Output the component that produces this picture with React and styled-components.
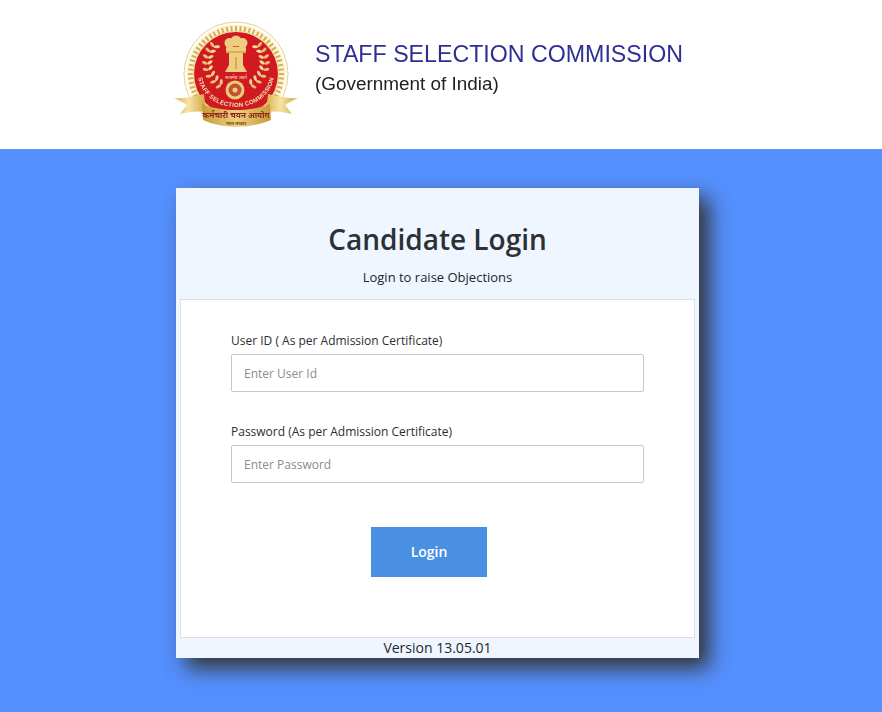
import React from 'react'
import styled, { createGlobalStyle } from 'styled-components'

const GlobalStyle = createGlobalStyle`
  html, body {
    margin: 0;
    padding: 0;
    background: #5590ff;
    font-family: "Open Sans", sans-serif;
  }
`

const Page = styled.div`
  width: 882px;
  height: 712px;
  overflow: hidden;
  background: #5590ff;
`

const Banner = styled.header`
  height: 149px;
  background: #fff;
  display: flex;
  align-items: flex-start;
  padding: 16px 0 0 172px;
  box-sizing: border-box;
`

const EmblemSvg = styled.svg`
  flex: none;
  overflow: visible;
  filter: blur(0.45px);
`

const BannerText = styled.div`
  margin: 24px 0 0 13px;
  font-family: "Liberation Sans", Arial, sans-serif;
  filter: blur(0.3px);
`

const BannerTitle = styled.div`
  font-size: 23.2px;
  line-height: 28px;
  color: #2e2f92;
  white-space: nowrap;
`

const BannerSub = styled.div`
  font-size: 18.9px;
  line-height: 24px;
  margin-top: 4px;
  color: #222;
`

const Card = styled.main`
  width: 523px;
  height: 470px;
  margin: 39px 0 0 176px;
  background: #eff6ff;
  box-shadow: 10px 10px 20px #333;
  display: flex;
  flex-direction: column;
  box-sizing: border-box;
  padding: 0 4px;
`

const CardHead = styled.div`
  height: 111px;
  flex: none;
  text-align: center;
  padding-top: 33px;
  box-sizing: border-box;
`

const Title = styled.h1`
  margin: 0;
  font-size: 28px;
  line-height: 36px;
  font-weight: 600;
  color: #2d3034;
`

const Subtitle = styled.p`
  margin: 11px 0 0;
  font-size: 13px;
  line-height: 18px;
  color: #212529;
`

const Panel = styled.form`
  height: 339px;
  flex: none;
  box-sizing: border-box;
  background: #fff;
  border: 1px solid #dcdfe3;
  padding: 32px 50px 0;
  display: flex;
  flex-direction: column;
`

const Field = styled.div`
  margin-bottom: 31px;
`

const Label = styled.label`
  display: block;
  font-size: 12px;
  line-height: 18px;
  color: #2b2e32;
  margin-bottom: 4px;
`

const Input = styled.input`
  display: block;
  width: 100%;
  height: 38px;
  box-sizing: border-box;
  border: 1px solid #c8c8c8;
  border-radius: 2px;
  padding: 0 12px;
  font-family: "Open Sans", sans-serif;
  font-size: 12px;
  background: #fff;
  &::placeholder {
    color: #8a8d91;
    opacity: 1;
  }
`

const Submit = styled.button`
  align-self: center;
  width: 116px;
  height: 50px;
  margin: 13px 0 0 -17px;
  padding: 0 0 2px;
  border: 0;
  background: #4a90e2;
  color: #fff;
  font-family: "Open Sans", sans-serif;
  font-size: 14px;
  font-weight: 600;
`

const Version = styled.div`
  height: 20px;
  font-size: 14px;
  line-height: 20px;
  text-align: center;
  color: #25282c;
`

const ticks = Array.from({ length: 64 }, (_, i) => (i * 360) / 64)

// stem points of one wreath branch: x, y, direction of the stem in degrees
const branch = [
  [42, 31, 115], [38, 36, 105], [36, 42, 95], [35.5, 48, 85], [36.5, 54, 72], [39.5, 60, 58], [44, 65, 45], [49, 69, 32],
]

const Wreath = ({ flip }) => (
  <g transform={flip ? 'translate(128 0) scale(-1 1)' : undefined}>
    {branch.map(([x, y, dir]) => (
      <g key={`${x}-${y}`} transform={`translate(${x} ${y}) rotate(${dir - 90})`}>
        <ellipse cx="-2.6" cy="-1.4" rx="3" ry="1.5" fill="#e6c274" transform="rotate(28 -2.6 -1.4)" />
        <ellipse cx="2.6" cy="-1.4" rx="3" ry="1.5" fill="#f2d996" transform="rotate(-28 2.6 -1.4)" />
      </g>
    ))}
  </g>
)

const Emblem = () => (
  <EmblemSvg width="130" height="114" viewBox="0 0 130 114">
    <defs>
      <linearGradient id="gold" x1="0" y1="0" x2="1" y2="0">
        <stop offset="0" stopColor="#dcb14b" />
        <stop offset="0.45" stopColor="#f5e3a4" />
        <stop offset="1" stopColor="#d3a63f" />
      </linearGradient>
      <linearGradient id="band" x1="0" y1="0" x2="1" y2="0">
        <stop offset="0" stopColor="#c99a3b" />
        <stop offset="0.5" stopColor="#ecd07f" />
        <stop offset="1" stopColor="#c99a3b" />
      </linearGradient>
      <path id="arc" d="M 26 58 A 38 33 0 0 0 102 58" />
    </defs>
    <circle cx="64" cy="58" r="52" fill="#fff" stroke="#e9cf8a" strokeWidth="1" />
    <circle cx="64" cy="58" r="49.5" fill="#fbf3d6" />
    {ticks.map((deg) => (
      <rect key={deg} x="63" y="10" width="2" height="6" fill="#d8ad50" transform={`rotate(${deg} 64 58)`} />
    ))}
    <circle cx="64" cy="58" r="42.5" fill="#d01920" stroke="#f3dca0" strokeWidth="1.2" />
    <Wreath />
    <Wreath flip />
    {/* lion capital */}
    <g fill="#efcd80">
      <circle cx="57.5" cy="27" r="5" />
      <circle cx="70.5" cy="27" r="5" />
      <circle cx="64" cy="25" r="5.5" />
      <rect x="54" y="31" width="20" height="6" rx="1" />
      <path d="M57 37 H71 L71 49 L75 56 H53 L57 49 Z" />
    </g>
    <path d="M54 36 H74 M64 41 V53" stroke="#c4923a" strokeWidth="1.2" />
    <text x="64" y="63" textAnchor="middle" fontFamily="Noto Sans, sans-serif" fontSize="4.5" fill="#f5e6c0">
      सत्यमेव जयते
    </text>
    <circle cx="63" cy="74" r="9.5" fill="#ecca7e" />
    <circle cx="63" cy="74" r="6.5" fill="#c4512f" />
    <circle cx="63" cy="74" r="2.5" fill="#edcc85" />
    <text fontFamily="Liberation Sans, sans-serif" fontSize="6" fontWeight="700" fill="#f5e2b0" letterSpacing="0.3">
      <textPath href="#arc" startOffset="50%" textAnchor="middle">STAFF SELECTION COMMISSION</textPath>
    </text>
    {/* ribbon */}
    <path d="M2 82 C12 83 22 80 32 78 L34 96 C24 95 16 96 8 98 C11 94 13 91 15 89 C11 86 6 84 2 82 Z" fill="url(#gold)" />
    <path d="M126 82 C116 83 106 80 96 78 L94 96 C104 95 112 96 120 98 C117 94 115 91 113 89 C117 86 122 84 126 82 Z" fill="url(#gold)" />
    <path d="M30 88 C50 96 78 96 98 88 L99 104 C78 113 50 113 31 104 Z" fill="url(#band)" />
    <text x="64" y="102" textAnchor="middle" fontFamily="Noto Sans, sans-serif" fontSize="8" fontWeight="700" fill="#8f2a1a">
      कर्मचारी चयन आयोग
    </text>
    <text x="64" y="108.5" textAnchor="middle" fontFamily="Noto Sans, sans-serif" fontSize="4" fontWeight="700" fill="#7a4a1a">
      भारत सरकार
    </text>
  </EmblemSvg>
)

export default function App() {
  return (
    <Page>
      <GlobalStyle />
      <Banner>
        <Emblem />
        <BannerText>
          <BannerTitle>STAFF SELECTION COMMISSION</BannerTitle>
          <BannerSub>(Government of India)</BannerSub>
        </BannerText>
      </Banner>
      <Card>
        <CardHead>
          <Title>Candidate Login</Title>
          <Subtitle>Login to raise Objections</Subtitle>
        </CardHead>
        <Panel>
          <Field>
            <Label>User ID ( As per Admission Certificate)</Label>
            <Input placeholder="Enter User Id" />
          </Field>
          <Field>
            <Label>Password (As per Admission Certificate)</Label>
            <Input placeholder="Enter Password" />
          </Field>
          <Submit type="button">Login</Submit>
        </Panel>
        <Version>Version 13.05.01</Version>
      </Card>
    </Page>
  )
}
